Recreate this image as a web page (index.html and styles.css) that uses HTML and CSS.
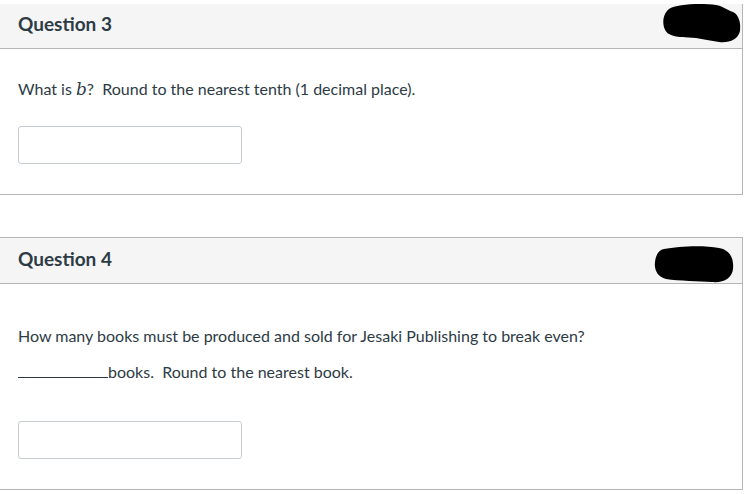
FILE: index.html
```html
<!DOCTYPE html>
<html>
<head>
<meta charset="utf-8">
<link rel="stylesheet" href="styles.css">
</head>
<body>
<div class="page">
  <section class="card card-q3">
    <header class="card-head head-q3">
      <h2 class="title">Question 3</h2>
      <svg class="blob blob-q3" viewBox="0 0 80 40" width="80" height="40">
        <path d="M 8 6 C 15 1, 40 0, 55 2 C 62 3, 66 7, 72 9 C 78 12, 80 20, 79 28 C 77 37, 68 40, 58 39 C 50 38, 42 36, 35 35 C 25 34, 15 35, 8 31 C 1 27, 0 12, 8 6 Z" fill="#000"/>
      </svg>
    </header>
    <div class="card-body body-q3">
      <p class="text">What is <span class="math">b</span>?&nbsp; Round to the nearest tenth (1 decimal place).</p>
      <div class="answer"></div>
    </div>
  </section>

  <section class="card card-q4">
    <header class="card-head head-q4">
      <h2 class="title">Question 4</h2>
      <svg class="blob blob-q4" viewBox="0 0 80 38" width="80" height="38">
        <path d="M 10 4 C 25 1, 50 0, 65 3 C 77 5, 80 15, 79 24 C 78 33, 70 38, 58 37 C 45 36, 25 36, 12 34 C 3 32, 0 24, 1 17 C 2 9, 5 5, 10 4 Z" fill="#000"/>
      </svg>
    </header>
    <div class="card-body body-q4">
      <p class="text">How many books must be produced and sold for Jesaki Publishing to break even?</p>
      <p class="text line2"><span class="blank"></span>books.&nbsp; Round to the nearest book.</p>
      <div class="answer answer-q4"></div>
    </div>
  </section>
</div>
</body>
</html>
```

FILE: styles.css
```css
html, body {
  margin: 0;
  padding: 0;
  background: #fff;
}
.page {
  width: 745px;
  font-family: Lato, "Open Sans", "Liberation Sans", sans-serif;
  color: #2d3b45;
}
.card {
  width: 742px;
  border-right: 1px solid #b5b5b5;
  border-bottom: 1px solid #b5b5b5;
  background: #fff;
}
.card-q3 {
  margin-top: 4px;
}
.card-q4 {
  margin-top: 42px;
  border-top: 1px solid #b5b5b5;
}
.card-head {
  position: relative;
  display: flex;
  align-items: center;
  padding-left: 18px;
  padding-bottom: 4px;
  box-sizing: border-box;
  background: #f5f5f5;
  border-bottom: 1px solid #b5b5b5;
}
.head-q3 { height: 45px; }
.head-q4 { height: 46px; }
.title {
  margin: 0;
  font-size: 19px;
  font-weight: 700;
  color: #2d3b45;
  line-height: 22px;
}
.blob {
  position: absolute;
  display: block;
}
.blob-q3 { left: 661px; top: -1px; }
.blob-q4 { left: 654px; top: 7px; }
.card-body {
  padding-left: 18px;
}
.body-q3 {
  padding-top: 30px;
  padding-bottom: 30px;
}
.body-q4 {
  padding-top: 42px;
  padding-bottom: 30px;
}
.text {
  margin: 0;
  font-size: 16px;
  line-height: 20px;
  color: #2d3b45;
}
.math {
  font-family: "DejaVu Serif", "Liberation Serif", serif;
  font-style: italic;
  font-size: 17px;
}
.line2 {
  margin-top: 16px;
}
.blank {
  display: inline-block;
  width: 90px;
  border-bottom: 1px solid #2d3b45;
  height: 15px;
  vertical-align: baseline;
}
.answer {
  margin-top: 27px;
  width: 222px;
  height: 36px;
  border: 1px solid #c7cdd1;
  border-radius: 3px;
  background: #fff;
}
.answer-q4 {
  margin-top: 39px;
}
```
